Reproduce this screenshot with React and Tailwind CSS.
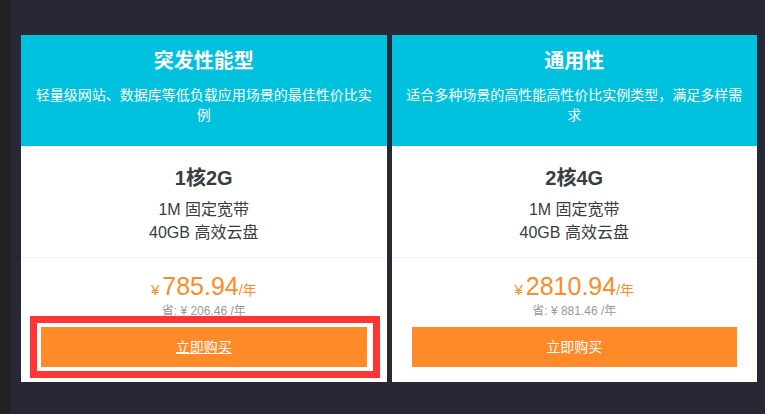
const plans = [
  {
    name: '突发性能型',
    desc: '轻量级网站、数据库等低负载应用场景的最佳性价比实例',
    spec: '1核2G',
    price: '785.94',
    save: '206.46',
    marked: true,
  },
  {
    name: '通用性',
    desc: '适合多种场景的高性能高性价比实例类型，满足多样需求',
    spec: '2核4G',
    price: '2810.94',
    save: '881.46',
    marked: false,
  },
];

const PlanCard = ({ plan }) => {
  return (
    <div className="relative flex-1 flex flex-col bg-white">
      <div className="bg-[#00c1de] text-white text-center px-[14px] pt-[12px] h-[111px]">
        <h2 className="text-[20px] leading-[28px] font-bold">{plan.name}</h2>
        <p className="mt-[10px] text-[14px] leading-[20px]">{plan.desc}</p>
      </div>
      <div className="text-center text-[#373d41] pt-[18px] h-[112px] border-b border-[#f0f0f0]">
        <p className="text-[20px] leading-[28px] font-bold">{plan.spec}</p>
        <p className="mt-[6px] text-[16px] leading-[23px]">1M 固定宽带</p>
        <p className="text-[16px] leading-[23px]">40GB 高效云盘</p>
      </div>
      <div className="flex flex-col items-center pt-[13px] pb-[15px] px-[20px]">
        <p className="text-[#ff8a27] leading-[30px] h-[30px]">
          <span className="text-[15px] mr-[3px]">¥</span>
          <span className="text-[25px]">{plan.price}</span>
          <span className="text-[14px]">/年</span>
        </p>
        <p className="mt-[2px] text-[12px] leading-[16px] text-[#999]">省: ¥ {plan.save} /年</p>
        <button
          className={
            plan.marked
              ? 'mt-[8px] w-full h-[40px] bg-[#ff8a27] text-white text-[14px] underline'
              : 'mt-[8px] w-full h-[40px] bg-[#ff8a27] text-white text-[14px]'
          }
        >
          立即购买
        </button>
      </div>
      {plan.marked && (
        <div className="absolute left-[9px] top-[281px] w-[350px] h-[62px] border-[7px] border-[#ff3535]"></div>
      )}
    </div>
  );
};

export default function App() {
  return (
    <div
      className="flex h-[414px] w-[765px] overflow-hidden bg-[#282736]"
      style={{ fontFamily: '"Liberation Sans", "Noto Sans CJK SC", sans-serif' }}
    >
      <div className="w-[11px] shrink-0 bg-[#222222]"></div>
      <div className="flex-1 pl-[10px] pr-[8px] pt-[35px]">
        <div className="flex gap-[5px] h-[347px]">
          {plans.map((plan) => (
            <PlanCard key={plan.name} plan={plan} />
          ))}
        </div>
      </div>
    </div>
  );
}
